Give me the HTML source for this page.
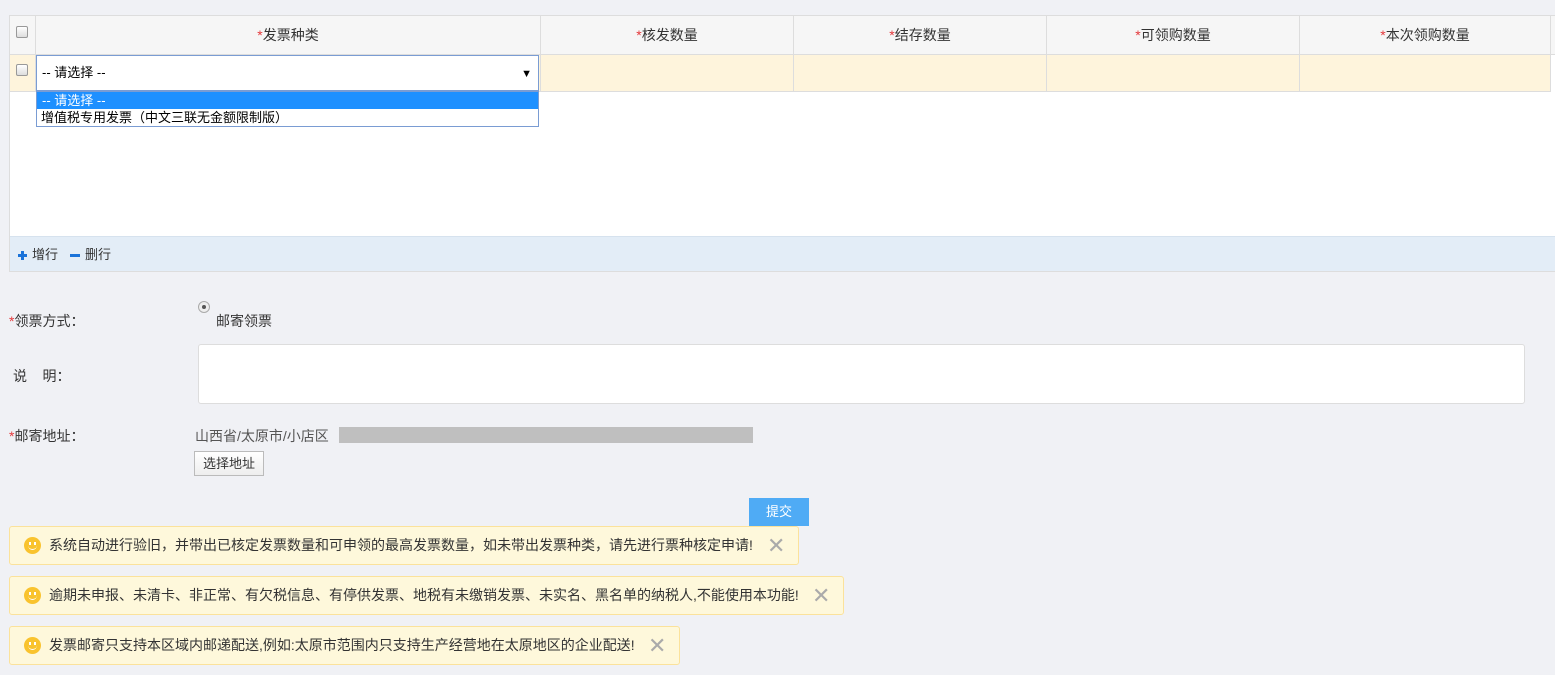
<!DOCTYPE html>
<html><head><meta charset="utf-8"><style>
*{box-sizing:border-box;margin:0;padding:0}
body{width:1555px;height:675px;background:#f0f1f5;font-family:"Liberation Sans","Noto Sans CJK SC",sans-serif;font-size:13px;color:#333;position:relative;overflow:hidden}
.abs{position:absolute}
.red{color:#e4393c}
.cb{position:absolute;width:12px;height:12px;border:1px solid #999;border-radius:2px;background:linear-gradient(#fff,#ddd)}
.hc{position:absolute;top:15px;height:40px;border-right:1px solid #ddd;border-bottom:1px solid #ddd;background:#f6f6f6;text-align:center;line-height:39px;font-size:14px}
.dc{position:absolute;top:55px;height:37px;border-right:1px solid #ddd;border-bottom:1px solid #ddd;background:#fef4dc}
.tip{position:absolute;left:9px;height:39px;background:#fef8db;border:1px solid #fbe29b;border-radius:3px;line-height:37px;padding-left:39px;font-size:14px;color:#333}
.tip .sm{position:absolute;left:14px;top:10px;width:17px;height:17px;border-radius:50%;background:#f9c32e}
.tip .sm:before{content:"";position:absolute;left:5px;top:5px;width:2px;height:3px;background:#fff;box-shadow:5px 0 #fff}
.tip .sm:after{content:"";position:absolute;left:4px;top:7px;width:9px;height:5px;border-bottom:1.5px solid #fff;border-radius:0 0 5px 5px}
.tip .x{position:absolute;top:0;font-size:22px;color:#aaa;font-weight:100}
</style></head><body>
<div class="abs" style="left:9px;top:15px;width:1550px;height:257px;background:#fff;border:1px solid #ddd"></div>
<div class="hc" style="left:9px;width:27px;border-left:1px solid #ddd;border-top:1px solid #ddd"></div>
<div class="cb" style="left:16px;top:26px"></div>
<div class="hc" style="left:36px;width:505px;border-top:1px solid #ddd"><span class="red">*</span>发票种类</div>
<div class="hc" style="left:541px;width:253px;border-top:1px solid #ddd"><span class="red">*</span>核发数量</div>
<div class="hc" style="left:794px;width:253px;border-top:1px solid #ddd"><span class="red">*</span>结存数量</div>
<div class="hc" style="left:1047px;width:253px;border-top:1px solid #ddd"><span class="red">*</span>可领购数量</div>
<div class="hc" style="left:1300px;width:251px;border-top:1px solid #ddd"><span class="red">*</span>本次领购数量</div>
<div class="hc" style="left:1551px;width:10px;border-top:1px solid #ddd"></div>
<div class="dc" style="left:9px;width:27px;border-left:1px solid #ddd"></div>
<div class="cb" style="left:16px;top:64px"></div>
<div class="dc" style="left:36px;width:505px"></div>
<div class="dc" style="left:541px;width:253px"></div>
<div class="dc" style="left:794px;width:253px"></div>
<div class="dc" style="left:1047px;width:253px"></div>
<div class="dc" style="left:1300px;width:251px"></div>
<div class="abs" style="left:36px;top:55px;width:503px;height:36px;background:#fff;border:1px solid #7a9cd3;line-height:34px;padding-left:5px;font-size:13px;color:#000">-- 请选择 --<span class="abs" style="right:6px;top:1px;font-size:11px">▼</span></div>
<div class="abs" style="left:36px;top:91px;width:503px;height:36px;background:#fff;border:1px solid #7a9cd3;font-size:13px;color:#000">
<div style="background:#1e90ff;color:#fff;height:17px;line-height:17px;padding-left:5px">-- 请选择 --</div>
<div style="height:17px;line-height:17px;padding-left:4px">增值税专用发票（中文三联无金额限制版）</div></div>
<div class="abs" style="left:10px;top:236px;width:1545px;height:35px;background:#e3edf7;border-top:1px solid #d6e2ee;line-height:36px;font-size:13px">
<span class="abs" style="left:8px;top:17px;width:9px;height:3px;background:#1a73d9"></span><span class="abs" style="left:11px;top:14px;width:3px;height:9px;background:#1a73d9"></span><span class="abs" style="left:22px">增行</span>
<span class="abs" style="left:60px;top:17px;width:10px;height:3px;background:#1a73d9"></span><span class="abs" style="left:75px">删行</span></div>
<div class="abs" style="left:9px;top:311px;font-size:14px"><span class="red">*</span>领票方式：</div>
<div class="abs" style="left:198px;top:301px;width:12px;height:12px;border:1px solid #aaa;border-radius:50%;background:#eee"><div style="margin:3px;width:4px;height:4px;border-radius:50%;background:#555"></div></div>
<div class="abs" style="left:216px;top:311px;font-size:14px">邮寄领票</div>
<div class="abs" style="left:13px;top:366px;font-size:14px">说&nbsp;&nbsp;&nbsp;&nbsp;明：</div>
<div class="abs" style="left:198px;top:344px;width:1327px;height:60px;background:#fff;border:1px solid #ddd;border-radius:3px"></div>
<div class="abs" style="left:9px;top:426px;font-size:14px"><span class="red">*</span>邮寄地址：</div>
<div class="abs" style="left:195px;top:426px;font-size:14px;color:#555">山西省/太原市/小店区</div>
<div class="abs" style="left:339px;top:427px;width:414px;height:16px;background:#bfbfbf"></div>
<div class="abs" style="left:194px;top:451px;width:70px;height:25px;border:1px solid #bbb;background:linear-gradient(#fff,#eee);text-align:center;line-height:23px;font-size:13px">选择地址</div>
<div class="abs" style="left:749px;top:498px;width:60px;height:28px;background:#4fabf5;color:#fff;text-align:center;line-height:28px;font-size:13px">提交</div>
<div class="tip" style="top:526px;width:790px"><span class="sm"></span>系统自动进行验旧，并带出已核定发票数量和可申领的最高发票数量，如未带出发票种类，请先进行票种核定申请!<span class="x" style="left:757px">✕</span></div>
<div class="tip" style="top:576px;width:835px"><span class="sm"></span>逾期未申报、未清卡、非正常、有欠税信息、有停供发票、地税有未缴销发票、未实名、黑名单的纳税人,不能使用本功能!<span class="x" style="left:802px">✕</span></div>
<div class="tip" style="top:626px;width:671px"><span class="sm"></span>发票邮寄只支持本区域内邮递配送,例如:太原市范围内只支持生产经营地在太原地区的企业配送!<span class="x" style="left:638px">✕</span></div>
</body></html>
